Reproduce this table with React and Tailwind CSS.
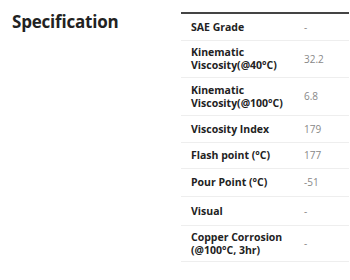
const rows = [
  { label: 'SAE Grade', value: '-', h: 'h-[27px]' },
  { label: ['Kinematic', 'Viscosity(@40°C)'], value: '32.2', h: 'h-[37px]' },
  { label: ['Kinematic', 'Viscosity(@100°C)'], value: '6.8', h: 'h-[38px]' },
  { label: 'Viscosity Index', value: '179', h: 'h-[27px]' },
  { label: 'Flash point (°C)', value: '177', h: 'h-[26px]' },
  { label: 'Pour Point (°C)', value: '-51', h: 'h-[28px]' },
  { label: 'Visual', value: '-', h: 'h-[29px]' },
  { label: ['Copper Corrosion', '(@100°C, 3hr)'], value: '-', h: 'h-[36px]' },
]

export default function App() {
  return (
    <div className="flex h-[280px] w-[350px] bg-white font-['Open_Sans',sans-serif] text-[#222]">
      <div className="w-[181px] shrink-0 pl-[12px] pt-[10px]">
        <h2 className="text-[17px] font-bold leading-[24px] tracking-[-0.2px]">Specification</h2>
      </div>
      <div className="w-[168px] pt-[12px]">
        <div className="border-t-2 border-[#444]">
          {rows.map((r, i) => (
            <div key={i} className={`grid grid-cols-[114px_1fr] items-center border-b border-[#eee] ${r.h}`}>
              <div className="pl-[10px] text-[10.5px] font-bold leading-[13px]">
                {Array.isArray(r.label) ? r.label.map((l) => <div key={l}>{l}</div>) : r.label}
              </div>
              <div className="pl-[9px] text-[10px] leading-[13px] text-[#888]">{r.value}</div>
            </div>
          ))}
        </div>
      </div>
    </div>
  )
}
